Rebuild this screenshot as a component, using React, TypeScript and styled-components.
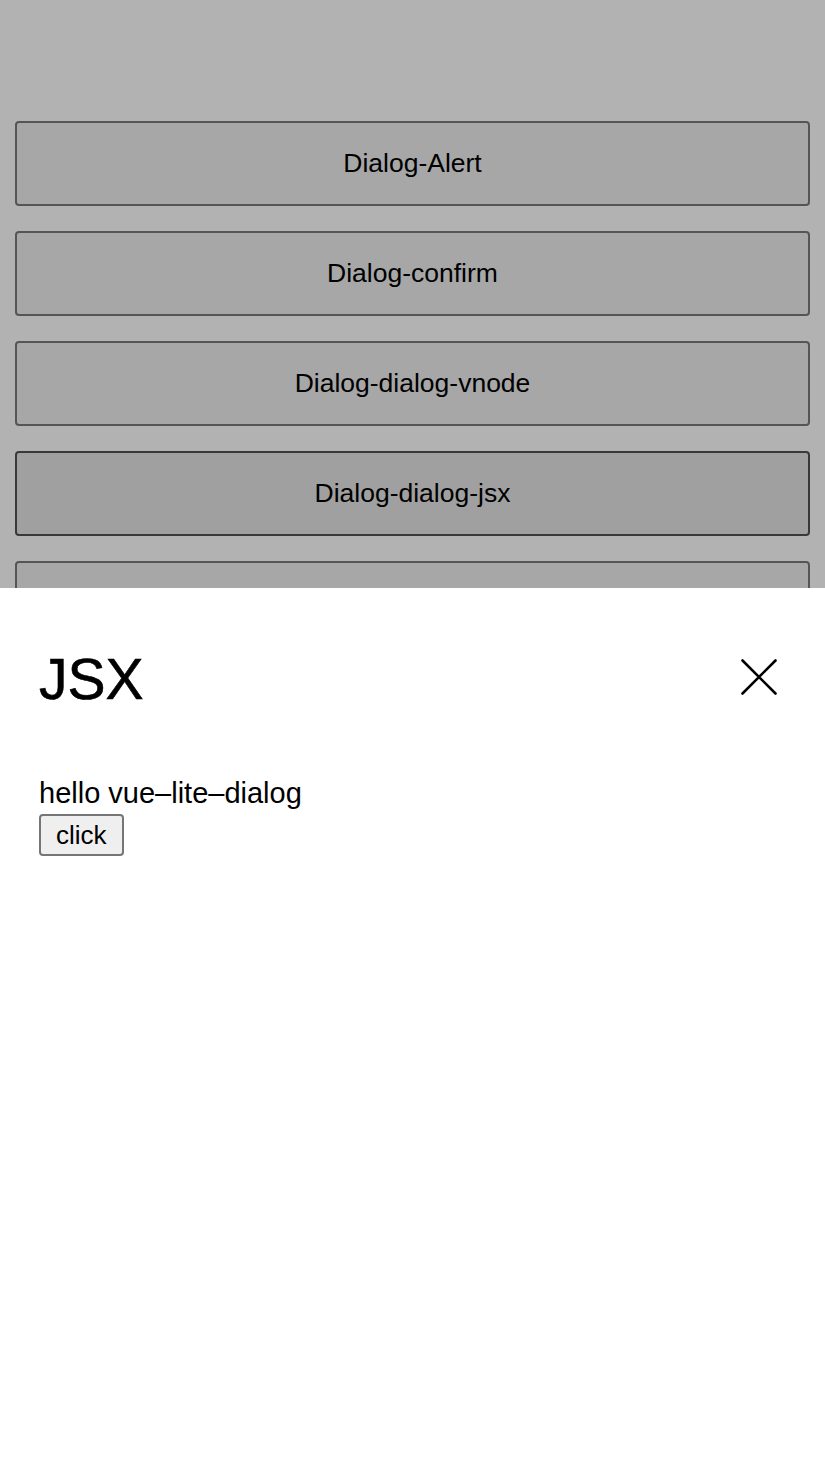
import styled, { createGlobalStyle } from "styled-components";

const items = [
  "Dialog-Alert",
  "Dialog-confirm",
  "Dialog-dialog-vnode",
  "Dialog-dialog-jsx",
  "Dialog-dialog-slot",
];

export default function App() {
  return (
    <>
      <Global />
      <Page>
        {items.map((label) => (
          <DemoBtn key={label} active={label === "Dialog-dialog-jsx"}>
            {label}
          </DemoBtn>
        ))}
      </Page>
      <Mask />
      <Sheet>
        <Header>
          <Title>JSX</Title>
          <Close aria-label="close">
            <svg width="36" height="36" viewBox="0 0 36 36">
              <path
                d="M1.5 1.5 L34.5 34.5 M34.5 1.5 L1.5 34.5"
                stroke="#000"
                strokeWidth="2.6"
                strokeLinecap="round"
              />
            </svg>
          </Close>
        </Header>
        <Body>
          <Text>hello vue–lite–dialog</Text>
          <ClickBtn>click</ClickBtn>
        </Body>
      </Sheet>
    </>
  );
}

const Global = createGlobalStyle`
  html, body {
    margin: 0;
    padding: 0;
    height: 100%;
    overflow: hidden;
    background: #fff;
    font-family: "Liberation Sans", Arial, sans-serif;
  }
`;

const Page = styled.div`
  display: flex;
  flex-direction: column;
  gap: 25px;
  padding: 121px 15px 0;
`;

const DemoBtn = styled.button<{ active?: boolean }>`
  height: 85px;
  width: 100%;
  flex-shrink: 0;
  box-sizing: border-box;
  border: 2px solid ${({ active }) => (active ? "#525252" : "#7a7a7a")};
  border-radius: 4px;
  background: ${({ active }) => (active ? "#e5e5e5" : "#efefef")};
  color: #000;
  font-family: "Liberation Sans", Arial, sans-serif;
  font-size: 26.5px;
  cursor: pointer;
`;

const Mask = styled.div`
  position: fixed;
  inset: 0;
  background: rgba(0, 0, 0, 0.3);
`;

const Sheet = styled.div`
  position: fixed;
  left: 0;
  right: 0;
  bottom: 0;
  top: 588px;
  background: #fff;
  display: flex;
  flex-direction: column;
`;

const Header = styled.div`
  display: flex;
  align-items: center;
  justify-content: space-between;
  padding: 59px 48px 0 39px;
`;

const Title = styled.h2`
  margin: 0;
  font-size: 57px;
  font-weight: 400;
  line-height: 64px;
  -webkit-text-stroke: 0.6px #000;
  color: #000;
`;

const Close = styled.button`
  display: flex;
  border: 0;
  padding: 0;
  background: none;
  cursor: pointer;
  margin-top: -4px;
`;

const Body = styled.div`
  padding: 66px 39px 0;
  display: flex;
  flex-direction: column;
  align-items: flex-start;
  gap: 5px;
`;

const Text = styled.div`
  font-size: 29px;
  line-height: 32px;
  color: #000;
`;

const ClickBtn = styled.button`
  height: 42px;
  padding: 0 15px;
  box-sizing: border-box;
  border: 2px solid #767676;
  border-radius: 4px;
  background: #efefef;
  color: #000;
  font-family: "Liberation Sans", Arial, sans-serif;
  font-size: 26px;
  cursor: pointer;
`;
